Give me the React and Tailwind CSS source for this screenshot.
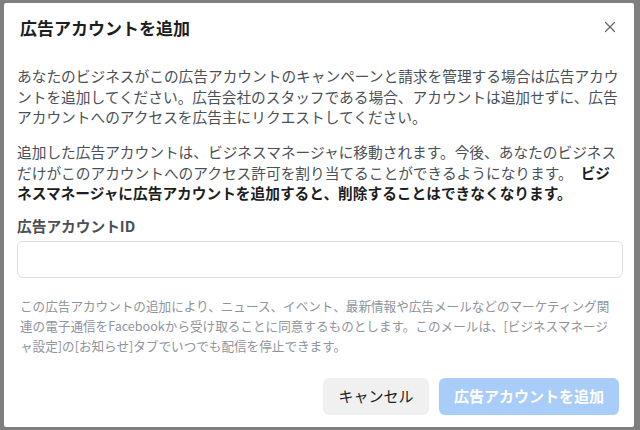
import { X } from 'lucide-react'

// 広告アカウント追加ダイアログ
const jp = { fontFamily: '"Noto Sans CJK JP", "Noto Sans", sans-serif' }

function App() {
  return (
    <div
      className="w-[640px] h-[430px] bg-[#7f7f7f] pl-[4px] pr-[6px] pt-[3px] pb-[3px]"
      style={jp}
    >
      <div className="h-full bg-white rounded-[2px] flex flex-col">
        <div className="h-[48px] flex items-center justify-between pl-[16px] pr-[15px]">
          <h1 className="text-[17px] font-bold text-[#1c1e21] leading-none">広告アカウントを追加</h1>
          <button className="text-[#606770]">
            <X size={18} strokeWidth={1.6} />
          </button>
        </div>

        <div className="pl-[13px] pr-[11px] pt-[15px] text-[14.7px] leading-[20.5px] text-[#4b4f56]">
          <p>
            あなたのビジネスがこの広告アカウントのキャンペーンと請求を管理する場合は広告アカウントを追加してください。広告会社のスタッフである場合、アカウントは追加せずに、広告アカウントへのアクセスを広告主にリクエストしてください。
          </p>
          <p className="mt-[14.5px]">
            追加した広告アカウントは、ビジネスマネージャに移動されます。今後、あなたのビジネスだけがこのアカウントへのアクセス許可を割り当てることができるようになります。
            <span className="ml-[8px] font-bold text-[#1c1e21]">
              ビジネスマネージャに広告アカウントを追加すると、削除することはできなくなります。
            </span>
          </p>

          <label className="block mt-[12px] text-[14.7px] leading-[20px] font-semibold text-[#4b4f56]">
            広告アカウントID
          </label>
          <input
            type="text"
            className="mt-[5px] block w-full h-[37px] rounded-[6px] border border-[#dddfe2] px-3 outline-none"
          />

          <p className="mt-[18px] pl-[3px] pr-[8px] text-[12.6px] leading-[20px] text-[#90949c]">
            この広告アカウントの追加により、ニュース、イベント、最新情報や広告メールなどのマーケティング関連の電子通信をFacebookから受け取ることに同意するものとします。このメールは、[ビジネスマネージャ設定]の[お知らせ]タブでいつでも配信を停止できます。
          </p>
        </div>

        <div className="mt-auto flex justify-end gap-[10px] pr-[15px] pb-[12px]">
          <button className="w-[106px] h-[37px] rounded-[6px] bg-[#f0f0f0] text-[15px] text-[#1c1e21]">
            キャンセル
          </button>
          <button className="w-[180px] h-[37px] rounded-[6px] bg-[#a7cdf8] text-[15px] font-bold text-white">
            広告アカウントを追加
          </button>
        </div>
      </div>
    </div>
  )
}

export default App
